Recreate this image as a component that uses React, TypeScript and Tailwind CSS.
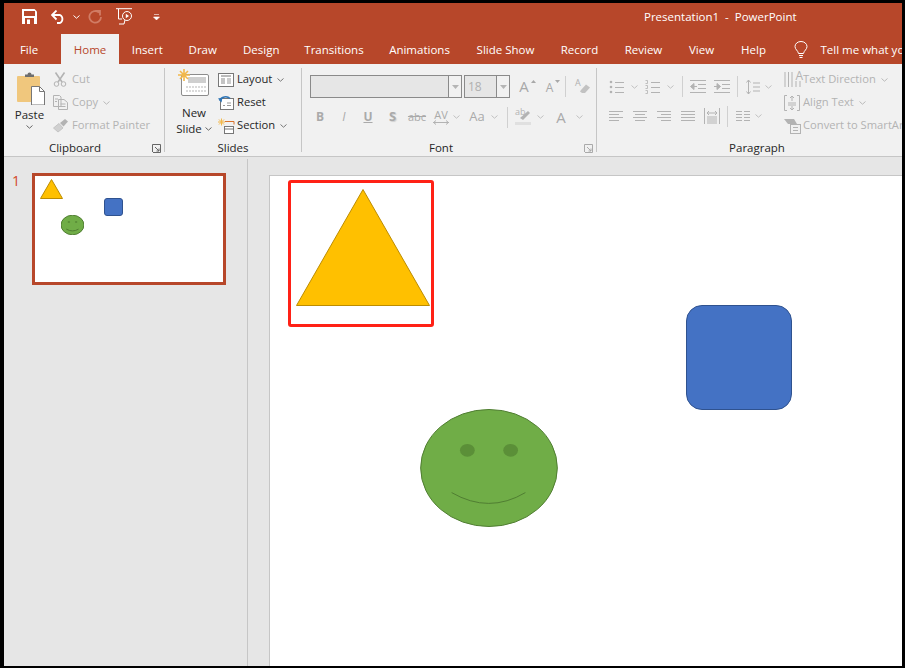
import type { ReactNode } from "react";

const GRAY = "#b3b3b3";

function Chevron({ color = "#8a8a8a", className = "" }: { color?: string; className?: string }) {
  return (
    <svg width="7" height="4" viewBox="0 0 7 4" className={`shrink-0 ${className}`}>
      <path d="M0.5 0.5 L3.5 3.2 L6.5 0.5" fill="none" stroke={color} />
    </svg>
  );
}

function Launcher({ dark }: { dark?: boolean }) {
  const c = dark ? "#666" : "#aaa";
  return (
    <svg width="9" height="9" viewBox="0 0 9 9" className="absolute right-[3px] top-[4px]">
      <path d="M0.5 8V0.5H8.5V8.5H1M3 3L7 7M7 4.5V7H4.5" fill="none" stroke={c} />
    </svg>
  );
}

function Label({ children, pr, launcher, dark }: { children: ReactNode; pr: string; launcher?: boolean; dark?: boolean }) {
  return (
    <div className={`relative h-[16px] flex items-center justify-center text-[11.5px] text-[#262626] mt-auto ${pr}`}>
      <span>{children}</span>
      {launcher && <Launcher dark={dark} />}
    </div>
  );
}

function Sep({ className = "h-[21px]" }: { className?: string }) {
  return <div className={`w-px bg-[#d0d0d0] shrink-0 ${className}`} />;
}

function GroupSep() {
  return <div className="w-px bg-[#c6c6c6] mt-[4px] mb-[4px] shrink-0" />;
}

function ToolRow({ icon, text, arrow, color }: { icon: ReactNode; text: string; arrow?: boolean; color: string }) {
  return (
    <div className="h-[23px] flex items-center whitespace-nowrap" style={{ color }}>
      <div className="w-[19px] flex items-center shrink-0">{icon}</div>
      <span className="text-[11.2px]">{text}</span>
      {arrow && <Chevron className="ml-[5px]" color={color === GRAY ? "#b9b9b9" : "#777"} />}
    </div>
  );
}

function Lines({ w = 14, rows = 4, align = "left" }: { w?: number; rows?: number; align?: string }) {
  const parts = [];
  for (let i = 0; i < rows; i++) {
    const short = i % 2 === 1;
    const len = short && align !== "just" ? w - 4 : w;
    const x = align === "right" ? w - len : align === "center" ? (w - len) / 2 : 0;
    parts.push(<path key={i} d={`M${x} ${i * 3 + 1.5}h${len}`} stroke={GRAY} />);
  }
  return (
    <svg width={w} height={rows * 3 + 1} viewBox={`0 0 ${w} ${rows * 3 + 1}`}>
      {parts}
    </svg>
  );
}

function Bullets({ numbered }: { numbered?: boolean }) {
  return (
    <svg width="15" height="14" viewBox="0 0 15 14" className="shrink-0">
      {[2, 7, 12].map((y) => (
        <g key={y}>
          {numbered ? (
            <path d={`M0.5 ${y - 1.5}h2v3h-2`} fill="none" stroke={GRAY} strokeWidth="0.8" />
          ) : (
            <circle cx="2" cy={y} r="1.3" fill={GRAY} />
          )}
          <path d={`M6 ${y + 0.5}h9`} stroke={GRAY} />
        </g>
      ))}
    </svg>
  );
}

function Indent({ flip }: { flip?: boolean }) {
  return (
    <svg width="16" height="13" viewBox="0 0 16 13">
      <path d="M0 0.5h16M8 4.5h8M8 8.5h8M0 12.5h16" stroke={GRAY} />
      {flip ? (
        <path d="M0 6.5h4M3 3.5l3.5 3-3.5 3z" fill={GRAY} stroke={GRAY} />
      ) : (
        <path d="M7 6.5h-4M4 3.5l-3.5 3 3.5 3z" fill={GRAY} stroke={GRAY} />
      )}
    </svg>
  );
}

function ClipboardGroup() {
  return (
    <div className="w-[160px] shrink-0 flex flex-col">
      <div className="flex pt-[4px]">
        <div className="w-[49px] flex flex-col items-center pl-[2px]">
          <svg width="30" height="33" viewBox="0 0 30 33" className="mt-[4px] ml-[2px]">
            <rect x="1" y="4" width="23" height="26" rx="1" fill="#f0c77d" />
            <path d="M9 5V2.5h2.5a2 2 0 0 1 4 0H18V5z" fill="#6e6e6e" />
            <path d="M15.5 14.5h8l5 5V33h-13z" fill="#fff" stroke="#777" />
            <path d="M23.5 14.5v5h5" fill="none" stroke="#777" />
          </svg>
          <span className="text-[11.5px] text-[#262626] leading-[15px] mt-[2px]">Paste</span>
          <Chevron color="#666" className="mt-[3px]" />
        </div>
        <div className="flex flex-col">
          <ToolRow
            color={GRAY}
            text="Cut"
            icon={
              <svg width="14" height="15" viewBox="0 0 14 15">
                <path d="M2.5 0.5L9 10M11.5 0.5L5 10" stroke={GRAY} strokeWidth="1.6" />
                <circle cx="3.5" cy="12" r="2.3" fill="none" stroke={GRAY} />
                <circle cx="10.5" cy="12" r="2.3" fill="none" stroke={GRAY} />
              </svg>
            }
          />
          <ToolRow
            color={GRAY}
            text="Copy"
            arrow
            icon={
              <svg width="15" height="15" viewBox="0 0 15 15">
                <path d="M0.5 0.5H6.5L8 2V11.5H0.5zM5.5 4.5H11L14.5 7.5V14.500H5.500zM2 4h3M2 6.500h2M7.500 9h5M7.500 11.500h5" fill="#f1f1f1" stroke={GRAY} />
              </svg>
            }
          />
          <ToolRow
            color={GRAY}
            text="Format Painter"
            icon={
              <svg width="16" height="15" viewBox="0 0 16 15">
                <path d="M0.5 10L6 5.5L10 10L5 14z" fill="#d0d0d0" stroke="#c4c4c4" />
                <path d="M7 5L12 1L15 3.500L10.500 8.500z" fill={GRAY} />
              </svg>
            }
          />
        </div>
      </div>
      <Label pr="pr-[18px]" launcher dark>
        Clipboard
      </Label>
    </div>
  );
}

function SlidesGroup() {
  return (
    <div className="w-[136px] shrink-0 flex flex-col">
      <div className="flex pt-[4px]">
        <div className="w-[53px] flex flex-col items-center pl-[5px] text-[11.5px] text-[#262626] leading-[16px]">
          <svg width="32" height="28" viewBox="0 0 32 28" className="mt-[1px]">
            <rect x="3.5" y="5.5" width="27" height="21" rx="1.5" fill="#fff" stroke="#8c8c8c" />
            <rect x="10" y="8" width="18" height="6" fill="#cfcfcf" />
            <path d="M8 18h20M8 22h20" stroke="#b5b5b5" strokeDasharray="2 1" />
            <path d="M6 0v12M0 6h12M2 2l8 8M10 2l-8 8" stroke="#f2b84b" strokeWidth="1.6" />
          </svg>
          <span className="mt-[8px]">New</span>
          <span className="flex items-center">
            Slide
            <Chevron color="#666" className="ml-[3px]" />
          </span>
        </div>
        <div className="flex flex-col text-[#262626]">
          <ToolRow
            color="#262626"
            text="Layout"
            arrow
            icon={
              <svg width="16" height="14" viewBox="0 0 16 14">
                <rect x="0.5" y="0.5" width="15" height="13" fill="#fff" stroke="#777" />
                <path d="M3 3h10" stroke="#777" />
                <rect x="3" y="5" width="4" height="6" fill="#c4c4c4" />
                <path d="M9 6h4M9 8h4M9 10h4" stroke="#999" />
              </svg>
            }
          />
          <ToolRow
            color="#262626"
            text="Reset"
            icon={
              <svg width="16" height="15" viewBox="0 0 16 15">
                <rect x="2.5" y="3.5" width="13" height="11" fill="#fff" stroke="#777" />
                <path d="M9 8h4M9 10.500h4M5 10.500h2" stroke="#999" />
                <path d="M2 6C3 1.500 9 0.500 12 3.500" fill="none" stroke="#2e75b6" strokeWidth="1.6" />
                <path d="M0 3.500L4.500 2.500L3.500 7.500z" fill="#2e75b6" />
              </svg>
            }
          />
          <ToolRow
            color="#262626"
            text="Section"
            arrow
            icon={
              <svg width="17" height="16" viewBox="0 0 17 16">
                <path d="M3.500 0.500v7M0 4h7M1 1.500l5 5M6 1.500l-5 5" stroke="#f2b84b" />
                <path d="M7 3.500h9v3" fill="none" stroke="#d9722c" />
                <rect x="6.500" y="8.500" width="9" height="7" fill="#fff" stroke="#777" />
                <path d="M6.500 11h9" stroke="#777" />
              </svg>
            }
          />
        </div>
      </div>
      <Label pr="pr-0">Slides</Label>
    </div>
  );
}

function Combo({ w, inner, text }: { w: string; inner: string; text?: string }) {
  return (
    <div className={`h-[23px] ${w} border border-[#8a8a8a] flex bg-[#e6e6e6] shrink-0`}>
      <div className={`${inner} text-[12px] text-[#b0b0b0] pl-[3px] leading-[21px]`}>{text}</div>
      <div className="flex-1 border-l border-[#8a8a8a] bg-[#f1f1f1] flex items-center justify-center">
        <svg width="7" height="4" viewBox="0 0 7 4">
          <path d="M0 0h7L3.500 4z" fill="#b5b5b5" />
        </svg>
      </div>
    </div>
  );
}

function Slot({ w, children, className = "" }: { w: string; children: ReactNode; className?: string }) {
  return <div className={`${w} h-[20px] shrink-0 flex items-center justify-center ${className}`}>{children}</div>;
}

function FontGroup() {
  return (
    <div className="w-[294px] shrink-0 flex flex-col">
      <div className="flex items-center pt-[11px] pl-[8px]">
        <Combo w="w-[152px]" inner="w-[137px]" />
        <div className="ml-[2px]">
          <Combo w="w-[46px]" inner="w-[31px]" text="18" />
        </div>
        <Slot w="w-[14px]" className="ml-[7px]">
          <span className="text-[15px] text-[#a8a8a8]">A</span>
        </Slot>
        <svg width="5" height="3" viewBox="0 0 5 3" className="mb-[10px] shrink-0">
          <path d="M0 3L2.500 0L5 3z" fill="#a8a8a8" />
        </svg>
        <Slot w="w-[11px]" className="ml-[8px]">
          <span className="text-[12px] mt-[3px] text-[#a8a8a8]">A</span>
        </Slot>
        <svg width="5" height="3" viewBox="0 0 5 3" className="mb-[10px] shrink-0">
          <path d="M0 0L2.500 3L5 0z" fill="#a8a8a8" />
        </svg>
        <Sep className="h-[21px] ml-[5px]" />
        <div className="relative w-[15px] h-[18px] ml-[9px] shrink-0 text-[9px] text-[#b0b0b0]">
          <span className="absolute left-0 top-[-2px]">A</span>
          <svg width="12" height="11" viewBox="0 0 12 11" className="absolute right-0 bottom-[2px]">
            <path d="M3 7L8 1.500L12 4.500L7 10H4L2 8.500z" fill="#c2c2c2" />
          </svg>
        </div>
      </div>
      <div className="flex items-center mt-[9px] pl-[6px] h-[20px] text-[#aaaaaa]">
        <Slot w="w-[24px]">
          <span className="text-[12px] font-bold">B</span>
        </Slot>
        <Slot w="w-[24px]">
          <span className="text-[12px] italic">I</span>
        </Slot>
        <Slot w="w-[24px]">
          <span className="text-[12px] font-bold underline">U</span>
        </Slot>
        <Slot w="w-[25px]">
          <span className="text-[13px] font-bold [text-shadow:1px_1px_1px_#d0d0d0]">S</span>
        </Slot>
        <Slot w="w-[24px]">
          <span className="text-[11px] line-through">abc</span>
        </Slot>
        <Slot w="w-[24px]">
          <span className="flex flex-col items-center leading-[11px] text-[11px]">
            AV
            <svg width="16" height="5" viewBox="0 0 16 5">
              <path d="M0 2.500h16M3 0.500L0.500 2.500L3 4.500M13 0.500L15.500 2.500L13 4.500" fill="none" stroke={GRAY} />
            </svg>
          </span>
        </Slot>
        <Chevron color="#c0c0c0" />
        <Slot w="w-[22px]" className="ml-[6px]">
          <span className="text-[13px]">Aa</span>
        </Slot>
        <Chevron color="#c0c0c0" className="ml-[3px]" />
        <Sep className="h-[21px] ml-[9px]" />
        <div className="relative w-[16px] h-[18px] ml-[7px] shrink-0 text-[9px] text-[#b3b3b3]">
          <span className="absolute left-0 top-[-3px]">ab</span>
          <svg width="16" height="18" viewBox="0 0 16 18" className="absolute left-0 top-0">
            <path d="M5 10L13 3L15 5L8 12z" fill={GRAY} />
            <rect x="0" y="14" width="16" height="3" fill="#e0e0e0" />
          </svg>
        </div>
        <Chevron color="#c0c0c0" className="ml-[6px]" />
        <Slot w="w-[14px]" className="ml-[10px]">
          <span className="text-[15px]">A</span>
        </Slot>
        <Chevron color="#c0c0c0" className="ml-[8px]" />
      </div>
      <Label pr="pr-[16px]" launcher>
        Font
      </Label>
    </div>
  );
}

function ParagraphGroup() {
  return (
    <div className="w-[320px] shrink-0 flex flex-col">
      <div className="flex">
        <div className="w-[187px] shrink-0 pl-[12px]">
          <div className="flex items-center mt-[15px] h-[15px]">
            <Bullets />
            <Chevron color="#c0c0c0" className="ml-[7px]" />
            <div className="w-[7px] shrink-0" />
            <Bullets numbered />
            <Chevron color="#c0c0c0" className="ml-[7px]" />
            <Sep className="h-[21px] ml-[8px]" />
            <div className="ml-[7px]">
              <Indent />
            </div>
            <div className="ml-[8px]">
              <Indent flip />
            </div>
            <Sep className="h-[21px] ml-[7px]" />
            <svg width="14" height="16" viewBox="0 0 14 16" className="ml-[8px] shrink-0">
              <path d="M2.500 1v14M0.500 3.500L2.500 1L4.500 3.500M0.500 12.500L2.500 15L4.500 12.500M7 4h7M7 8h7M7 12h7" fill="none" stroke={GRAY} />
            </svg>
            <Chevron color="#c0c0c0" className="ml-[5px]" />
          </div>
          <div className="flex items-center mt-[12px] h-[20px]">
            <Lines />
            <div className="ml-[10px]">
              <Lines align="center" />
            </div>
            <div className="ml-[10px]">
              <Lines align="right" />
            </div>
            <div className="ml-[10px]">
              <Lines align="just" />
            </div>
            <svg width="16" height="16" viewBox="0 0 16 16" className="ml-[9px] shrink-0">
              <path d="M0.500 0v16M15.500 0v16M3 9h10M3 11h10M3 13h10M3 15h10M3 5h10M3 5l2-2M3 5l2 2M13 5l-2-2M13 5l-2 2" fill="none" stroke={GRAY} />
            </svg>
            <Sep className="h-[21px] ml-[7px]" />
            <div className="ml-[8px]">
              <svg width="14" height="10" viewBox="0 0 14 10">
                <path d="M0 0.500h6M0 3.500h6M0 6.500h6M0 9.500h6M8 0.500h6M8 3.500h6M8 6.500h6M8 9.500h6" stroke={GRAY} />
              </svg>
            </div>
            <Chevron color="#c0c0c0" className="ml-[5px]" />
          </div>
        </div>
        <div className="flex flex-col pt-[4px]">
          <ToolRow
            color={GRAY}
            text="Text Direction"
            arrow
            icon={
              <div className="relative w-[18px] h-[16px] text-[12px]">
                <span className="absolute right-[-1px] top-[-5px]">A</span>
                <svg width="18" height="16" viewBox="0 0 18 16" className="absolute left-0 top-0">
                  <path d="M1 0v15M4.500 0v15M8 0v15M12 9v6M16 9v6" stroke={GRAY} />
                </svg>
              </div>
            }
          />
          <ToolRow
            color={GRAY}
            text="Align Text"
            arrow
            icon={
              <svg width="16" height="16" viewBox="0 0 16 16">
                <path d="M3 0.500H0.500V15.500H3M13 0.500H15.500V15.500H13M8 1v5M6 3l2-2 2 2M4 8h8M4 10h8M8 11v4M6 13l2 2 2-2" fill="none" stroke={GRAY} />
              </svg>
            }
          />
          <ToolRow
            color={GRAY}
            text="Convert to SmartArt"
            icon={
              <svg width="17" height="16" viewBox="0 0 17 16">
                <path d="M0 1h10l3 5H4z" fill={GRAY} />
                <rect x="6.500" y="6.500" width="10" height="9" fill="#f1f1f1" stroke={GRAY} />
                <path d="M9 9.500h5M9 12.500h5" stroke={GRAY} />
              </svg>
            }
          />
        </div>
      </div>
      <Label pr="pr-0">Paragraph</Label>
    </div>
  );
}

const tabs = [
  { name: "Insert", w: "w-[56.5px]" },
  { name: "Draw", w: "w-[54.5px]" },
  { name: "Design", w: "w-[62.5px]" },
  { name: "Transitions", w: "w-[83px]" },
  { name: "Animations", w: "w-[88px]" },
  { name: "Slide Show", w: "w-[84px]" },
  { name: "Record", w: "w-[64px]" },
  { name: "Review", w: "w-[64px]" },
  { name: "View", w: "w-[52px]" },
  { name: "Help", w: "w-[52px]" },
];

function TitleBar() {
  return (
    <div className="h-[31px] flex items-center text-white pl-[18px] pb-[4px] shrink-0">
      <svg width="15" height="15" viewBox="0 0 15 15" className="shrink-0">
        <path d="M0 0H12.500L15 2.500V15H0z" fill="#fff" />
        <rect x="2" y="2" width="11" height="5" fill="#b7472a" />
        <rect x="3" y="9" width="9" height="6" fill="#b7472a" />
        <rect x="5" y="10.500" width="3" height="4.500" fill="#fff" />
      </svg>
      <svg width="15" height="14" viewBox="0 0 15 14" className="ml-[14px] shrink-0">
        <path d="M1.500 5H9a4.500 4.500 0 0 1 0 8H6" fill="none" stroke="#fff" strokeWidth="1.800" />
        <path d="M5.500 0.500L1 5L5.500 9.500" fill="none" stroke="#fff" strokeWidth="1.800" />
      </svg>
      <Chevron color="#fff" className="ml-[7px]" />
      <svg width="14" height="14" viewBox="0 0 14 14" className="ml-[8px] shrink-0">
        <path d="M11 2.500A5.800 5.800 0 1 0 13 7M7.500 1H12V5.500" fill="none" stroke="#d17c65" strokeWidth="1.800" />
      </svg>
      <svg width="17" height="17" viewBox="0 0 17 17" className="ml-[14px] shrink-0">
        <path d="M0 0.700H16M2.500 1V11H6M3 16h5l1-4" fill="none" stroke="#fff" />
        <circle cx="11" cy="8" r="4.500" fill="none" stroke="#fff" />
        <path d="M9.800 5.800L13 8L9.800 10.200z" fill="#fff" />
      </svg>
      <svg width="7" height="6" viewBox="0 0 7 6" className="ml-[20px] shrink-0">
        <path d="M1 0.500H6M0.500 3H6.500L3.500 6z" fill="#fff" stroke="#fff" strokeWidth="0.600" />
      </svg>
      <span className="ml-[484px] text-[11.5px] whitespace-pre">Presentation1  -  PowerPoint</span>
    </div>
  );
}

function TabBar() {
  return (
    <div className="h-[30px] flex text-white text-[11.5px] shrink-0 pt-[1px]">
      <div className="w-[57px] pr-[7px] shrink-0 flex items-center justify-center">File</div>
      <div className="w-[58px] -mt-[1px] shrink-0 bg-[#f1f1f1] text-[#b7472a] flex items-center justify-center pt-[1px]">Home</div>
      {tabs.map((t) => (
        <div key={t.name} className={`${t.w} shrink-0 flex items-center justify-center`}>
          {t.name}
        </div>
      ))}
      <div className="flex items-center ml-[14px] whitespace-nowrap">
        <svg width="14" height="18" viewBox="0 0 14 18" className="shrink-0">
          <path d="M4.500 12.500C4 9.500 1 8.500 1 5.500a6 5 0 0 1 12 0C13 8.500 10 9.500 9.500 12.500zM5 14.500h4M5.500 16.500h3" fill="none" stroke="#fff" />
        </svg>
        <span className="ml-[13px] text-[11.5px]">Tell me what you want to do</span>
      </div>
    </div>
  );
}

function Triangle({ w, h, sw = 1 }: { w: number; h: number; sw?: number }) {
  return (
    <svg width={w} height={h} viewBox={`0 0 ${w} ${h}`}>
      <path d={`M${w / 2} 0.500L${w - 0.5} ${h - 0.5}H0.500z`} fill="#ffc000" stroke="#bc8c00" strokeWidth={sw} />
    </svg>
  );
}

function Smiley({ className }: { className: string }) {
  return (
    <svg viewBox="0 0 140 120" className={className}>
      <ellipse cx="70" cy="60" rx="69.500" ry="59.500" fill="#70ad47" stroke="#507e32" vectorEffect="non-scaling-stroke" />
      <ellipse cx="48" cy="42" rx="7.500" ry="6.500" fill="#5b8f38" />
      <ellipse cx="92" cy="42" rx="7.500" ry="6.500" fill="#5b8f38" />
      <path d="M32 85Q70 107 107 85" fill="none" stroke="#507e32" vectorEffect="non-scaling-stroke" />
    </svg>
  );
}

function Thumbnail() {
  return (
    <div className="relative w-[194px] h-[112px] border-[3px] border-[#b7472a] bg-white shrink-0">
      <div className="absolute left-[5px] top-[3px]">
        <Triangle w={23} h={20} />
      </div>
      <div className="absolute left-[69px] top-[22px] w-[19px] h-[18px] rounded-[3px] bg-[#4472c4] border border-[#2f528f]" />
      <Smiley className="absolute left-[26px] top-[39px] w-[23px] h-[20px]" />
    </div>
  );
}

function Canvas() {
  return (
    <div className="relative flex-1 mt-[18px] ml-[21px] bg-white border-l border-t border-[#c6c6c6]">
      <div className="absolute left-[18px] top-[4px] w-[146px] h-[147px] border-[3px] border-[#ff2116] rounded-[3px]" />
      <div className="absolute left-[26px] top-[13px]">
        <Triangle w={134} h={117} />
      </div>
      <div className="absolute left-[416px] top-[129px] w-[106px] h-[105px] rounded-[16px] bg-[#4472c4] border border-[#2f528f]" />
      <Smiley className="absolute left-[150px] top-[233px] w-[138px] h-[118px]" />
    </div>
  );
}

export default function App() {
  return (
    <div
      className="w-[905px] h-[668px] box-border border-t-[3px] border-l-[4px] border-r-[3px] border-b-[2px] border-black overflow-hidden bg-[#e6e6e6] flex flex-col"
      style={{ fontFamily: '"Open Sans", "Liberation Sans", sans-serif' }}
    >
      <div className="bg-[#b7472a] shrink-0">
        <TitleBar />
        <TabBar />
      </div>
      <div className="h-[92px] bg-[#f1f1f1] flex shrink-0 border-b border-[#c6c6c6] box-content">
        <ClipboardGroup />
        <GroupSep />
        <SlidesGroup />
        <GroupSep />
        <FontGroup />
        <GroupSep />
        <ParagraphGroup />
      </div>
      <div className="flex-1 flex min-h-0">
        <div className="w-[243px] shrink-0 flex pt-[14px] border-r border-[#c6c6c6] box-content mt-[2px]">
          <div className="w-[28px] pl-[8px] text-[14px] leading-[16px] text-[#d24726]">1</div>
          <Thumbnail />
        </div>
        <Canvas />
      </div>
    </div>
  );
}
